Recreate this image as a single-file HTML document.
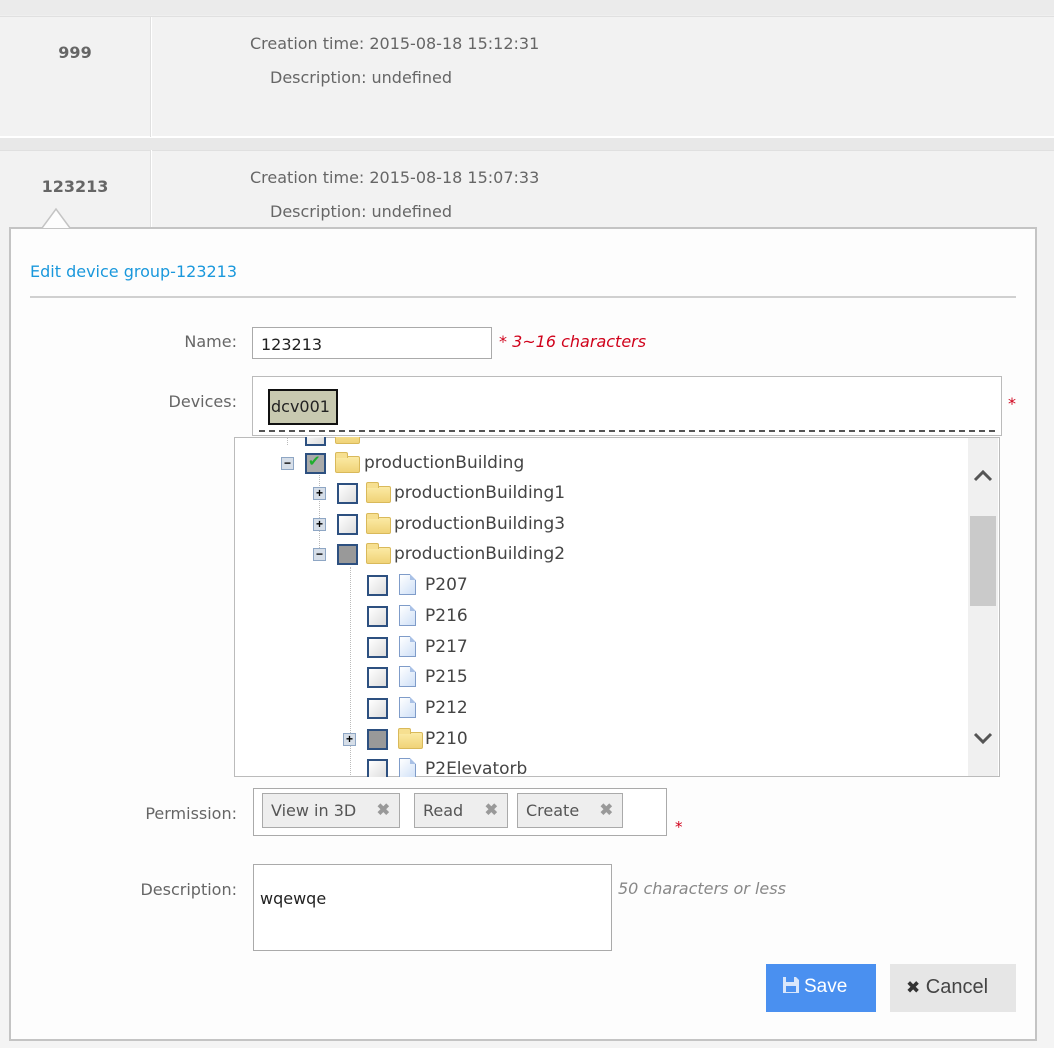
<!DOCTYPE html>
<html><head><meta charset="utf-8"><style>
*{margin:0;padding:0;box-sizing:border-box}
body{width:1054px;height:1048px;position:relative;overflow:hidden;background:#efefef;font-family:"DejaVu Sans","Liberation Sans",sans-serif;font-size:16px;color:#555}
.a{position:absolute;white-space:nowrap}
.lbl{position:absolute;text-align:right;color:#666;font-size:16px}
.c{margin-right:5px}
.cb{position:absolute;width:21px;height:21px;border:2px solid #2d5080;background:linear-gradient(135deg,#fff,#ddd)}
.cb.g{background:#999}
.tg{position:absolute;width:13px;height:13px;border:1px solid #8ea6c4;background:#d6dee8;font-size:12px;line-height:10px;text-align:center;color:#000;font-weight:bold;font-family:"Liberation Sans",sans-serif}
.fd{position:absolute;width:25px;height:17px;background:linear-gradient(#fbeaa4,#f0d378);border:1px solid #d9b95a;border-radius:2px}
.fd:before{content:"";position:absolute;left:-1px;top:-5px;width:11px;height:5px;background:#f6df90;border:1px solid #d9b95a;border-bottom:none;border-radius:2px 2px 0 0}
.fl{position:absolute;width:17px;height:21px;background:linear-gradient(135deg,#fff,#cfe0f7);border:1px solid #7f9cc9}
.fl:after{content:"";position:absolute;right:-1px;top:-1px;border-style:solid;border-width:0 6px 6px 0;border-color:#fff #fff #a9c1e6 #a9c1e6}
.tx{position:absolute;font-size:17px;color:#444;white-space:nowrap}
.tag{position:absolute;top:793px;height:35px;border:1px solid #aaa;background:#eee;padding:0 8px;line-height:34px;font-size:16px;color:#555;white-space:nowrap}
.tag b{color:#999;position:absolute;right:9px;font-family:"Liberation Sans",sans-serif}
</style></head><body>
<div class="a" style="left:0;top:0;width:1054px;height:15px;background:#ebebeb"></div>
<div class="a" style="left:0;top:16px;width:1054px;height:122px;background:#f2f2f2;border-top:1px solid #e0e0e0;border-bottom:2px solid #fff"></div>
<div class="a" style="left:150px;top:17px;width:2px;height:120px;background:#fff;border-left:1px solid #e0e0e0"></div>
<div class="a" style="left:0;top:138px;width:1054px;height:12px;background:#e8e8e8"></div>
<div class="a" style="left:0;top:150px;width:1054px;height:180px;background:#f2f2f2;border-top:1px solid #e0e0e0"></div>
<div class="a" style="left:150px;top:150px;width:2px;height:180px;background:#fff;border-left:1px solid #e0e0e0"></div>
<div class="a" style="left:0;top:330px;width:1054px;height:718px;background:#f4f4f4"></div>
<div class="a" style="left:0;top:43px;width:150px;text-align:center;font-weight:bold;color:#666;font-size:16px">999</div>
<div class="a" style="left:0;top:177px;width:150px;text-align:center;font-weight:bold;color:#666;font-size:16px">123213</div>
<div class="a" style="left:250px;top:34px;color:#666">Creation time:<span class="c"></span>2015-08-18 15:12:31</div>
<div class="a" style="left:270px;top:68px;color:#666">Description:<span class="c"></span>undefined</div>
<div class="a" style="left:250px;top:168px;color:#666">Creation time:<span class="c"></span>2015-08-18 15:07:33</div>
<div class="a" style="left:270px;top:202px;color:#666">Description:<span class="c"></span>undefined</div>
<!-- dialog -->
<div class="a" style="left:9px;top:227px;width:1028px;height:814px;background:#fdfdfd;border:2px solid #c4c4c4"></div>
<svg class="a" style="left:42px;top:207px" width="30" height="22"><path d="M0 21 L14 2 L28 21" fill="#fdfdfd" stroke="#c4c4c4" stroke-width="1.5"/></svg>
<div class="a" style="left:30px;top:262px;color:#1a98dc;font-size:16px">Edit device group-123213</div>
<div class="a" style="left:30px;top:296px;width:986px;height:2px;background:#d0d0d0"></div>
<div class="lbl" style="left:100px;width:142px;top:332px">Name:<span class="c"></span></div>
<div class="a" style="left:252px;top:327px;width:240px;height:32px;border:1px solid #aaa;background:#fff;padding:7px 8px;color:#222">123213</div>
<div class="a" style="left:499px;top:332px;color:#d0021b;font-style:italic">* 3~16 characters</div>
<div class="lbl" style="left:100px;width:142px;top:392px">Devices:<span class="c"></span></div>
<div class="a" style="left:252px;top:376px;width:750px;height:60px;border:1px solid #bbb;background:#fff"></div>
<div class="a" style="left:259px;top:430px;width:736px;border-top:2px dashed #555"></div>
<div class="a" style="left:268px;top:389px;width:70px;height:36px;background:#c8c9b0;border:2px solid #111;color:#222;line-height:32px;padding-left:1px;font-size:16px">dcv001</div>
<div class="a" style="left:1008px;top:394px;color:#d0021b;font-size:16px">*</div>
<!-- tree -->
<div class="a" style="left:234px;top:437px;width:766px;height:340px;border:1px solid #bbb;background:#fff;overflow:hidden">
  <div class="a" style="left:733px;top:0;width:30px;height:340px;background:#f0f0f0"></div>
  <div class="a" style="left:735px;top:78px;width:26px;height:90px;background:#cacaca"></div>
  <svg class="a" style="left:737px;top:30px" width="22" height="16"><path d="M3 12 L11 4 L19 12" fill="none" stroke="#555" stroke-width="3"/></svg>
  <svg class="a" style="left:737px;top:292px" width="22" height="16"><path d="M3 4 L11 12 L19 4" fill="none" stroke="#555" stroke-width="3"/></svg>
</div>
<div class="a" style="left:234px;top:437px;width:736px;height:340px;overflow:hidden">
  <div class="cb" style="left:71px;top:-12px"></div><div class="fd" style="left:101px;top:-10px"></div>
  <div class="a" style="left:53px;top:0;height:8px;border-left:1px dotted #bbb"></div>
  <div class="tg" style="left:47px;top:20px">−</div>
  <div class="cb" style="left:71px;top:16px;background:#a9aaaa"><span style="position:absolute;left:1px;top:-3px;color:#1fae2e;font-size:15px;font-weight:bold">✔</span></div>
  <div class="fd" style="left:101px;top:19px"></div><div class="tx" style="left:130px;top:16px">productionBuilding</div>
  <div class="a" style="left:85px;top:38px;height:85px;border-left:1px dotted #bbb"></div>
  <div class="tg" style="left:79px;top:50px">+</div><div class="cb" style="left:103px;top:46px"></div><div class="fd" style="left:132px;top:49px"></div><div class="tx" style="left:160px;top:46px">productionBuilding1</div>
  <div class="tg" style="left:79px;top:81px">+</div><div class="cb" style="left:103px;top:77px"></div><div class="fd" style="left:132px;top:80px"></div><div class="tx" style="left:160px;top:77px">productionBuilding3</div>
  <div class="tg" style="left:79px;top:111px">−</div><div class="cb g" style="left:103px;top:107px"></div><div class="fd" style="left:132px;top:110px"></div><div class="tx" style="left:160px;top:107px">productionBuilding2</div>
  <div class="a" style="left:116px;top:130px;height:220px;border-left:1px dotted #bbb"></div>
  <div class="cb" style="left:133px;top:138px"></div><div class="fl" style="left:165px;top:137px"></div><div class="tx" style="left:191px;top:138px">P207</div>
  <div class="cb" style="left:133px;top:169px"></div><div class="fl" style="left:165px;top:168px"></div><div class="tx" style="left:191px;top:169px">P216</div>
  <div class="cb" style="left:133px;top:200px"></div><div class="fl" style="left:165px;top:199px"></div><div class="tx" style="left:191px;top:200px">P217</div>
  <div class="cb" style="left:133px;top:230px"></div><div class="fl" style="left:165px;top:229px"></div><div class="tx" style="left:191px;top:230px">P215</div>
  <div class="cb" style="left:133px;top:261px"></div><div class="fl" style="left:165px;top:260px"></div><div class="tx" style="left:191px;top:261px">P212</div>
  <div class="tg" style="left:109px;top:296px">+</div><div class="cb g" style="left:133px;top:292px"></div><div class="fd" style="left:164px;top:295px"></div><div class="tx" style="left:191px;top:292px">P210</div>
  <div class="cb" style="left:133px;top:322px"></div><div class="fl" style="left:165px;top:321px"></div><div class="tx" style="left:191px;top:322px">P2Elevatorb</div>
</div>
<div class="lbl" style="left:90px;width:152px;top:804px">Permission:<span class="c"></span></div>
<div class="a" style="left:253px;top:788px;width:414px;height:48px;border:1px solid #aaa;background:#fff"></div>
<div class="tag" style="left:262px;width:138px">View in 3D<b>✖</b></div>
<div class="tag" style="left:414px;width:94px">Read<b>✖</b></div>
<div class="tag" style="left:517px;width:106px">Create<b>✖</b></div>
<div class="a" style="left:675px;top:818px;color:#d0021b;font-size:15px">*</div>
<div class="lbl" style="left:90px;width:152px;top:880px">Description:<span class="c"></span></div>
<div class="a" style="left:253px;top:864px;width:359px;height:87px;border:1px solid #aaa;background:#fff;padding:24px 6px;color:#222">wqewqe</div>
<div class="a" style="left:618px;top:879px;color:#888;font-style:italic">50 characters or less</div>
<div class="a" style="left:766px;top:964px;width:110px;height:48px;background:#4a90f0;color:#fff;font-size:19px;line-height:46px;padding-left:16px;font-family:'Liberation Sans',sans-serif"><svg width="18" height="18" viewBox="0 0 18 18" style="vertical-align:-2px;margin-right:4px"><path d="M1 1H14L17 4V17H1Z" fill="#d8e6fb"/><rect x="4" y="1" width="8" height="5" fill="#4a90f0"/><rect x="4" y="10" width="10" height="6" fill="#4a90f0"/></svg>Save</div>
<div class="a" style="left:890px;top:964px;width:126px;height:48px;background:#e6e6e6;color:#444;font-size:20px;line-height:46px;padding-left:16px;font-family:'Liberation Sans',sans-serif"><span style="font-size:17px;color:#333">✖</span> Cancel</div>
</body></html>
